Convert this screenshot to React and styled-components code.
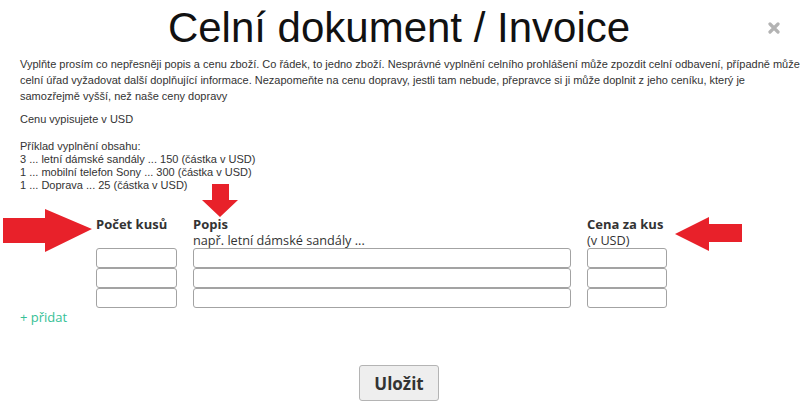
import React from 'react'
import styled, { createGlobalStyle } from 'styled-components'

const GlobalStyle = createGlobalStyle`
  body {
    margin: 0;
    background: #fff;
    font-family: "Liberation Sans", Arial, sans-serif;
    color: #333;
  }
`

const Page = styled.div`
  position: relative;
  width: 800px;
  height: 409px;
  padding: 4px 0 0 20px;
  box-sizing: border-box;
  overflow: hidden;
`

const Title = styled.h1`
  margin: 0;
  text-align: center;
  font-family: "Liberation Sans", Arial, sans-serif;
  font-weight: normal;
  font-size: 42px;
  line-height: 48px;
  color: #111;
  padding-right: 22px;
`

const Close = styled.button`
  position: absolute;
  top: 22px;
  right: 20px;
  width: 12px;
  height: 12px;
  padding: 0;
  border: 0;
  background: none;
  cursor: pointer;
`

const Intro = styled.p`
  margin: 4px 0 0;
  font-size: 11px;
  line-height: 16px;
  white-space: nowrap;
`

const Note = styled.p`
  margin: ${p => p.gap}px 0 0;
  font-size: 11px;
  line-height: ${p => p.lh}px;
`

const Form = styled.div`
  margin: 25px 0 0 76px;
  font-family: "Open Sans", sans-serif;
`

const Grid = styled.div`
  display: grid;
  grid-template-columns: 81px 378px 80px;
  column-gap: 16px;
`

const Head = styled.div`
  display: flex;
  flex-direction: column;
  gap: 1px;
  padding-bottom: 1px;
`

const Label = styled.span`
  font-weight: bold;
  font-size: 13px;
  line-height: 15px;
  color: #333;
`

const Hint = styled.span`
  font-size: 12.7px;
  line-height: 14px;
  color: #333;
`

const Col = styled.div`
  display: flex;
  flex-direction: column;
`

const Input = styled.input`
  box-sizing: border-box;
  width: 100%;
  height: 20px;
  margin: 0;
  border: 1px solid #a3a3a3;
  border-radius: 3px;
  background: #fff;
  font: 12px "Open Sans", sans-serif;
  padding: 0 4px;
`

const Add = styled.a`
  display: block;
  margin-top: 1px;
  font-family: "Open Sans", sans-serif;
  font-size: 13px;
  line-height: 16px;
  color: #35c196;
  text-decoration: none;
`

const Footer = styled.div`
  display: flex;
  justify-content: center;
  margin-top: 40px;
  padding-right: 22px;
`

const Save = styled.button`
  width: 80px;
  height: 36px;
  border: 1px solid #b4b4b4;
  border-radius: 3px;
  background: #eeeeee;
  font-family: "Open Sans", sans-serif;
  font-weight: bold;
  font-size: 17px;
  color: #333;
  cursor: pointer;
`

const Arrow = styled.svg`
  position: absolute;
  left: ${p => p.x}px;
  top: ${p => p.y}px;
  fill: #e8212a;
`

const rows = [0, 1, 2]

export default function App() {
  return (
    <>
      <GlobalStyle />
      <Page>
        <Title>Celní dokument / Invoice</Title>
        <Close aria-label="zavřít">
          <svg width="12" height="12" viewBox="0 0 12 12">
            <path d="M2 2 L10 10 M10 2 L2 10" stroke="#b3b3b3" strokeWidth="3.2" strokeLinecap="round" />
          </svg>
        </Close>

        <Intro>
          Vyplňte prosím co nepřesněji popis a cenu zboží. Co řádek, to jedno zboží. Nesprávné vyplnění celního prohlášení může zpozdit celní odbavení, případně může<br />
          celní úřad vyžadovat další doplňující informace. Nezapomeňte na cenu dopravy, jestli tam nebude, přepravce si ji může doplnit z jeho ceníku, který je<br />
          samozřejmě vyšší, než naše ceny dopravy
        </Intro>
        <Note gap={7} lh={16}>Cenu vypisujete v USD</Note>
        <Note gap={13} lh={13}>
          Příklad vyplnění obsahu:<br />
          3 ... letní dámské sandály ... 150 (částka v USD)<br />
          1 ... mobilní telefon Sony ... 300 (částka v USD)<br />
          1 ... Doprava ... 25 (částka v USD)
        </Note>

        <Form>
          <Grid>
            <Head>
              <Label>Počet kusů</Label>
              <Hint>&nbsp;</Hint>
            </Head>
            <Head>
              <Label>Popis</Label>
              <Hint>např. letní dámské sandály ...</Hint>
            </Head>
            <Head>
              <Label>Cena za kus</Label>
              <Hint>(v USD)</Hint>
            </Head>
            <Col>
              {rows.map(i => <Input key={i} type="text" />)}
            </Col>
            <Col>
              {rows.map(i => <Input key={i} type="text" />)}
            </Col>
            <Col>
              {rows.map(i => <Input key={i} type="text" />)}
            </Col>
          </Grid>
        </Form>

        <Add href="#">+ přidat</Add>

        <Footer>
          <Save>Uložit</Save>
        </Footer>

        <Arrow x={3} y={209} width="90" height="44" viewBox="0 0 90 44">
          <polygon points="0,9 42,9 42,0 89,20 42,43 42,34 0,34" />
        </Arrow>
        <Arrow x={202} y={184} width="36" height="34" viewBox="0 0 36 34">
          <polygon points="10,0 27,0 27,16 36,16 18,33 0,16 10,16" />
        </Arrow>
        <Arrow x={675} y={217} width="68" height="35" viewBox="0 0 68 35">
          <polygon points="0,17 34,0 34,7 67,7 67,25 34,25 34,34" />
        </Arrow>
      </Page>
    </>
  )
}
